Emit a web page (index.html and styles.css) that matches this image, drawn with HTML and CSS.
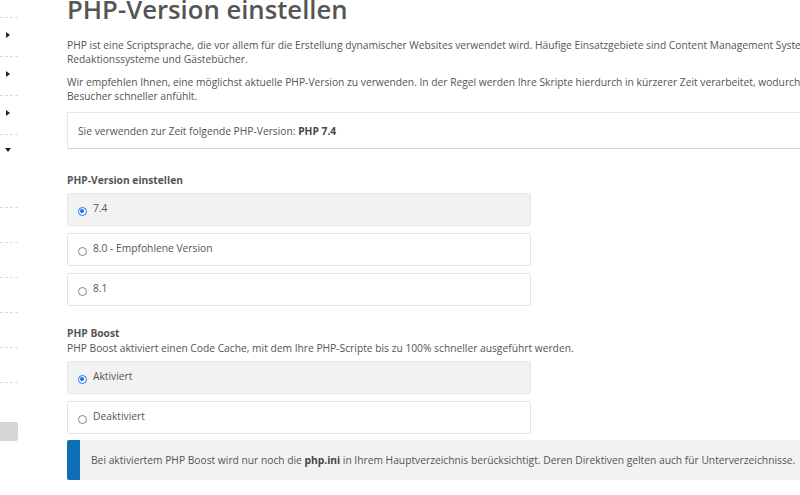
FILE: index.html
```html
<!DOCTYPE html>
<html lang="de">
<head>
<meta charset="utf-8">
<title>PHP-Version einstellen</title>
<link rel="stylesheet" href="styles.css">
</head>
<body>
<div class="layout">
  <nav class="sidebar">
    <div class="nav-item top"></div>
    <div class="nav-item"><span class="tri-right"></span></div>
    <div class="nav-item"><span class="tri-right"></span></div>
    <div class="nav-item"><span class="tri-right"></span></div>
    <div class="nav-item open"><span class="tri-down"></span></div>
    <div class="nav-item sub"></div>
    <div class="nav-item sub"></div>
    <div class="nav-item sub"></div>
    <div class="nav-item sub"></div>
    <div class="nav-item sub"></div>
    <div class="nav-button"></div>
  </nav>
  <main class="main">
    <h1 class="title">PHP-Version einstellen</h1>
    <p class="text">PHP ist eine Scriptsprache, die vor allem für die Erstellung dynamischer Websites verwendet wird. Häufige Einsatzgebiete sind Content Management Systeme, Blogs,<br>Redaktionssysteme und Gästebücher.</p>
    <p class="text">Wir empfehlen Ihnen, eine möglichst aktuelle PHP-Version zu verwenden. In der Regel werden Ihre Skripte hierdurch in kürzerer Zeit verarbeitet, wodurch sich Ihre Website für<br>Besucher schneller anfühlt.</p>
    <div class="current">Sie verwenden zur Zeit folgende PHP-Version: <strong>PHP 7.4</strong></div>

    <h2 class="section-title first">PHP-Version einstellen</h2>
    <div class="options">
      <label class="option selected"><span class="radio checked"></span><span class="label">7.4</span></label>
      <label class="option"><span class="radio"></span><span class="label">8.0 - Empfohlene Version</span></label>
      <label class="option"><span class="radio"></span><span class="label">8.1</span></label>
    </div>

    <h2 class="section-title second">PHP Boost</h2>
    <p class="desc">PHP Boost aktiviert einen Code Cache, mit dem Ihre PHP-Scripte bis zu 100% schneller ausgeführt werden.</p>
    <div class="options">
      <label class="option selected"><span class="radio checked"></span><span class="label">Aktiviert</span></label>
      <label class="option"><span class="radio"></span><span class="label">Deaktiviert</span></label>
    </div>
    <div class="notice">Bei aktiviertem PHP Boost wird nur noch die <strong>php.ini</strong> in Ihrem Hauptverzeichnis berücksichtigt. Deren Direktiven gelten auch für Unterverzeichnisse.</div>
  </main>
</div>
</body>
</html>
```
FILE: styles.css
```css
html, body {
  margin: 0;
  padding: 0;
  background: #fff;
  overflow: hidden;
}
body {
  font-family: "Open Sans", "Noto Sans", sans-serif;
  color: #555;
  font-size: 10.25px;
  width: 800px;
  height: 495px;
}
.layout {
  display: flex;
  align-items: flex-start;
}
.sidebar {
  width: 18px;
  flex: 0 0 18px;
  display: flex;
  flex-direction: column;
}
.nav-item {
  border-bottom: 1px dashed #dcdcdc;
  position: relative;
  box-sizing: border-box;
  height: 39px;
}
.nav-item.top { height: 18px; }
.nav-item.open { height: 73px; }
.nav-item.sub { height: 35px; }
.tri-right {
  position: absolute;
  left: 6px;
  top: 14px;
  width: 0;
  height: 0;
  border-top: 3.5px solid transparent;
  border-bottom: 3.5px solid transparent;
  border-left: 4px solid #222;
}
.tri-down {
  position: absolute;
  left: 5px;
  top: 13px;
  width: 0;
  height: 0;
  border-left: 3.5px solid transparent;
  border-right: 3.5px solid transparent;
  border-top: 4px solid #222;
}
.nav-button {
  margin-top: 39px;
  height: 19px;
  background: #d6d6d6;
  border-radius: 0 2px 2px 0;
}
.main {
  margin-left: 49px;
  flex: 0 0 820px;
  width: 820px;
}
.title {
  margin: -8px 0 10px;
  font-size: 25.7px;
  line-height: 36px;
  font-weight: 600;
  color: #555;
}
.text {
  margin: 0 0 9px;
  line-height: 14px;
  white-space: nowrap;
}
.current {
  margin-top: 0;
  border: 1px solid #e6e6e6;
  border-bottom-color: #d4d4d4;
  padding: 11px 10px 10px;
  line-height: 14px;
}
.current strong { font-weight: 700; color: #444; }
.section-title {
  margin: 24px 0 6px;
  font-size: 10.25px;
  line-height: 14px;
  font-weight: 700;
  color: #555;
}
.section-title.second {
  margin-top: 20px;
}
.options {
  width: 464px;
  display: flex;
  flex-direction: column;
  gap: 7px;
}
.option {
  display: flex;
  align-items: center;
  height: 33px;
  box-sizing: border-box;
  border: 1px solid #e3e3e3;
  border-radius: 2px;
  padding-left: 10px;
  background: #fff;
}
.option.selected {
  background: #f2f2f2;
  border-color: #e6e6e6;
}
.radio {
  width: 9px;
  height: 9px;
  border: 1px solid #888;
  border-radius: 50%;
  margin-top: 4px;
  margin-right: 6px;
  box-sizing: border-box;
  background: #fff;
  position: relative;
}
.radio.checked {
  border: 1.5px solid #1a73e8;
}
.radio.checked::after {
  content: "";
  position: absolute;
  left: 1px;
  top: 1px;
  width: 3.5px;
  height: 3.5px;
  border-radius: 50%;
  background: #1a73e8;
}
.label {
  line-height: 14px;
  margin-top: -3px;
}
.desc {
  margin: -5px 0 6px;
  line-height: 14px;
}
.notice {
  margin-top: 6px;
  background: #f2f2f2;
  border-left: 13px solid #0e6fb6;
  border-radius: 2px;
  padding: 13px 11px 13px;
  line-height: 14px;
  white-space: nowrap;
}
.notice strong { font-weight: 700; color: #444; }
```
